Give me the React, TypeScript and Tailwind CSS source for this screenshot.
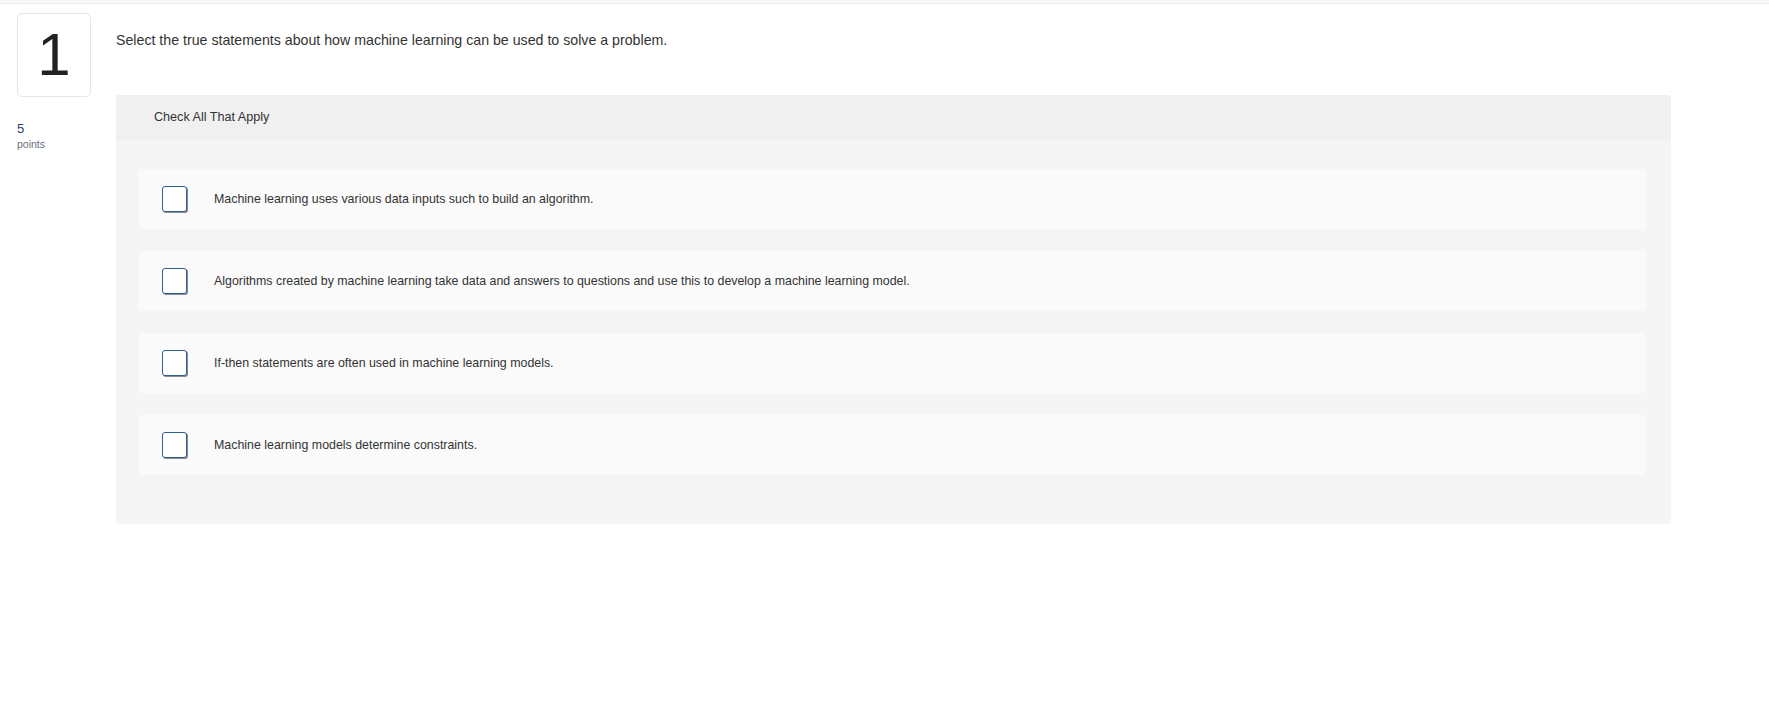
const options = [
  "Machine learning uses various data inputs such to build an algorithm.",
  "Algorithms created by machine learning take data and answers to questions and use this to develop a machine learning model.",
  "If-then statements are often used in machine learning models.",
  "Machine learning models determine constraints.",
];

function OptionRow({ text }: { text: string }) {
  return (
    <label className="flex h-[60px] items-center rounded-[3px] bg-[#fafafa] pl-[23px]">
      <span className="h-[26px] w-[25px] rounded-[3px] border border-[#2d5f98] bg-white shadow-[1px_1px_0_#8a8a8a]" />
      <span className="ml-[27px] text-[12.4px] text-[#333]">{text}</span>
    </label>
  );
}

export default function App() {
  return (
    <div className="min-h-screen bg-white font-['Liberation_Sans',Arial,sans-serif]">
      <div className="h-[4px] border-b border-[#ebebeb] bg-[#f8f8f8]" />
      <div className="flex pl-[17px] pt-[9px]">
        <div className="w-[74px] shrink-0">
          <div className="flex h-[84px] w-[74px] items-center justify-center rounded-[5px] border border-[#e6e6e6] bg-white">
            <span className="text-[60px] font-normal leading-none text-[#222]">1</span>
          </div>
          <div className="mt-[25px] text-[13px] leading-none text-[#2a3f6e]">5</div>
          <div className="mt-[4px] text-[10.5px] leading-none text-[#6b6f80]">points</div>
        </div>
        <div className="ml-[25px] w-[1555px]">
          <p className="mt-[20px] text-[14.2px] leading-none text-[#333]">
            Select the true statements about how machine learning can be used to solve a problem.
          </p>
          <div className="mt-[48px] rounded-[3px] bg-[#f5f5f5]">
            <div className="flex h-[45px] items-center rounded-t-[3px] bg-[#f0f0f0] pl-[38px] text-[12.6px] text-[#333]">
              Check All That Apply
            </div>
            <div className="flex flex-col gap-[22px] px-[23px] pb-[49px] pt-[29px] pr-[25px]">
              {options.map((o) => (
                <OptionRow key={o} text={o} />
              ))}
            </div>
          </div>
        </div>
      </div>
    </div>
  );
}
